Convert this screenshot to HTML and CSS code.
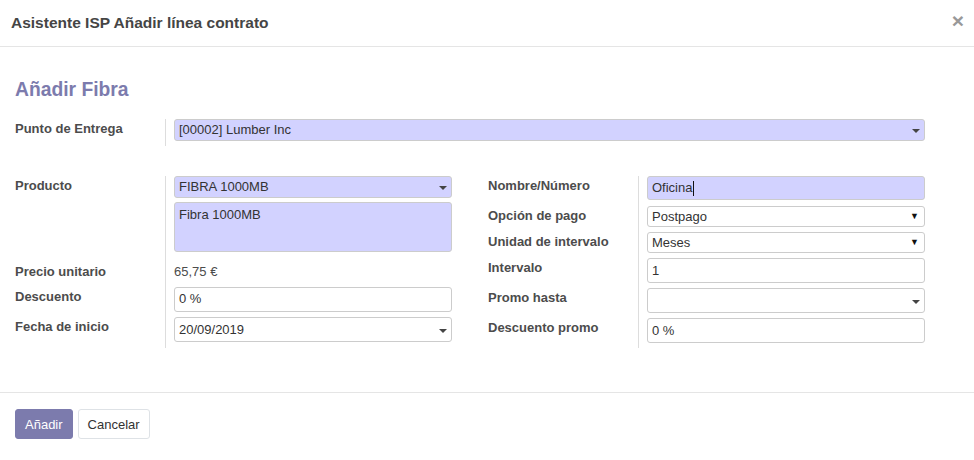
FILE: index.html
```html
<!DOCTYPE html>
<html lang="es">
<head>
<meta charset="utf-8">
<title>Asistente ISP Añadir línea contrato</title>
<link rel="stylesheet" href="styles.css">
</head>
<body>
<div class="modal">
  <header class="modal-header">
    <h4 class="modal-title">Asistente ISP Añadir línea contrato</h4>
    <span class="close">×</span>
  </header>
  <main class="modal-body">
    <h2 class="form-title">Añadir Fibra</h2>

    <div class="group group-full">
      <div class="lbl">Punto de Entrega</div>
      <div class="fld">
        <div class="inp req m2o h22">[00002] Lumber Inc<span class="caret"></span></div>
      </div>
    </div>

    <div class="cols">
      <div class="group">
        <div class="lbl">Producto</div>
        <div class="fld fld-prod">
          <div class="inp req m2o h22">FIBRA 1000MB<span class="caret"></span></div>
          <div class="inp req textarea">Fibra 1000MB</div>
        </div>
        <div class="lbl">Precio unitario</div>
        <div class="fld"><div class="plain">65,75 €</div></div>
        <div class="lbl">Descuento</div>
        <div class="fld"><div class="inp h25">0 %</div></div>
        <div class="lbl">Fecha de inicio</div>
        <div class="fld"><div class="inp m2o h25">20/09/2019<span class="caret"></span></div></div>
      </div>

      <div class="group">
        <div class="lbl">Nombre/Número</div>
        <div class="fld fld-6"><div class="inp req h24">Oficina<span class="cursor"></span></div></div>
        <div class="lbl">Opción de pago</div>
        <div class="fld"><div class="inp sel h21">Postpago<span class="tri">▼</span></div></div>
        <div class="lbl">Unidad de intervalo</div>
        <div class="fld"><div class="inp sel h21">Meses<span class="tri">▼</span></div></div>
        <div class="lbl">Intervalo</div>
        <div class="fld"><div class="inp h25">1</div></div>
        <div class="lbl">Promo hasta</div>
        <div class="fld"><div class="inp m2o h25"><span class="caret"></span></div></div>
        <div class="lbl">Descuento promo</div>
        <div class="fld"><div class="inp h25">0 %</div></div>
      </div>
    </div>
  </main>
  <footer class="modal-footer">
    <button class="btn btn-primary">Añadir</button>
    <button class="btn btn-secondary">Cancelar</button>
  </footer>
</div>
</body>
</html>
```

FILE: styles.css
```css
* { box-sizing: border-box; }
html, body { margin: 0; padding: 0; background: #fff; }
body {
  font-family: "Liberation Sans", Arial, sans-serif;
  font-size: 13px;
  line-height: 1.5;
  color: #4c4c4c;
  width: 974px;
  height: 460px;
  overflow: hidden;
}
.modal { width: 974px; }
.modal-header {
  height: 47px;
  border-bottom: 1px solid #e5e5e5;
  display: flex;
  align-items: center;
  justify-content: space-between;
  padding: 0 10px 0 11px;
}
.modal-title {
  margin: 0;
  font-size: 15.5px;
  font-weight: bold;
  color: #454545;
}
.close {
  font-size: 21px;
  font-weight: bold;
  color: #999;
  line-height: 1;
  margin-top: -6px;
}
.modal-body { padding: 0 15px; }
.form-title {
  margin: 31px 0 0;
  font-size: 19.3px;
  line-height: 24px;
  height: 24px;
  font-weight: bold;
  color: #7c7bad;
}
.group {
  display: grid;
  grid-template-columns: 150px 1fr;
  width: 437px;
}
.group-full { width: 910px; margin-top: 17px; }
.cols {
  display: flex;
  gap: 36px;
  margin-top: 30px;
}
.cols .group { width: 437px; }
.lbl {
  font-weight: bold;
  line-height: 19px;
  color: #4c4c4c;
}
.fld {
  border-left: 1px solid #ddd;
  padding: 0 0 5px 8px;
}
.fld-6 { padding-bottom: 6px; }
.fld-prod { padding-bottom: 9px; }
.inp {
  position: relative;
  border: 1px solid #ccc;
  border-radius: 3px;
  background: #fff;
  color: #333;
  padding: 0 4px;
  display: flex;
  align-items: center;
  white-space: nowrap;
}
.req { background: #d2d2ff; }
.h21 { height: 21px; }
.h22 { height: 22px; }
.h24 { height: 24px; }
.h25 { height: 25px; }
.textarea {
  margin-top: 4px;
  height: 50px;
  align-items: flex-start;
  padding-top: 2px;
}
.plain {
  height: 19px;
  line-height: 19px;
  color: #4c4c4c;
}
.caret {
  position: absolute;
  right: 4px;
  top: 50%;
  margin-top: -1px;
  width: 0;
  height: 0;
  border-left: 4px solid transparent;
  border-right: 4px solid transparent;
  border-top: 4px solid #444;
}
.tri {
  position: absolute;
  right: 5px;
  top: 50%;
  transform: translateY(-55%);
  font-size: 9px;
  color: #111;
}
.cursor {
  display: inline-block;
  width: 1px;
  height: 15px;
  background: #111;
  margin-left: 1px;
}
.modal-footer {
  margin-top: 44px;
  border-top: 1px solid #e5e5e5;
  padding: 16px 15px;
  display: flex;
  gap: 5px;
}
.btn {
  font-family: "Liberation Sans", Arial, sans-serif;
  font-size: 13px;
  height: 30px;
  padding: 0 9px;
  border-radius: 3px;
  cursor: pointer;
}
.btn-primary {
  background: #7c7bad;
  border: 1px solid #7c7bad;
  color: #fff;
}
.btn-secondary {
  background: #fff;
  border: 1px solid #dee2e6;
  color: #333;
}
```
